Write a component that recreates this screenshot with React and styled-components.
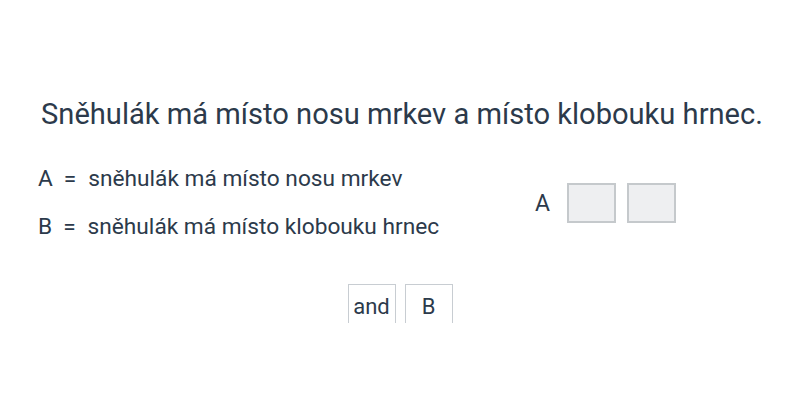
import React from 'react';
import styled, {createGlobalStyle} from "styled-components";

const GlobalStyle = createGlobalStyle`
  html, body {
    margin: 0;
    padding: 0;
    background: #ffffff;
  }
  body {
    font-family: Roboto, "Liberation Sans", sans-serif;
    color: #2c3a4b;
  }
`

const Page = styled.div`
  width: 800px;
  height: 400px;
  box-sizing: border-box;
  padding-top: 94px;
  display: flex;
  flex-direction: column;
  align-items: center;
`

const Title = styled.h1`
  margin: 0 0 0 4px;
  font-size: 29.1px;
  font-weight: 400;
  line-height: 40px;
  white-space: nowrap;
`

const Middle = styled.div`
  width: 100%;
  box-sizing: border-box;
  margin-top: 27px;
  padding: 0 124px 0 38px;
  display: flex;
  align-items: center;
  justify-content: space-between;
`

const Definitions = styled.div`
  display: flex;
  flex-direction: column;
  gap: 12px;
`

const Def = styled.div`
  font-size: 22.7px;
  line-height: 36px;
  white-space: nowrap;
`

const Eq = styled.span`
  display: inline-block;
  margin: 0 12px 0 11px;
`

const Slots = styled.div`
  display: flex;
  align-items: center;
  gap: 11px;
`

const SlotLabel = styled.span`
  font-size: 23px;
  margin-right: 6px;
`

const Slot = styled.div`
  width: 45px;
  height: 36px;
  border: 2px solid #c5c9cc;
  background: #eeeff1;
`

const Bottom = styled.div`
  margin-top: 39px;
  height: 39px;
  overflow: hidden;
  display: flex;
  gap: 9px;
`

const Chip = styled.div`
  width: 46px;
  height: 44px;
  border: 1px solid #c8cdd2;
  font-size: 22px;
  display: flex;
  justify-content: center;
  padding-top: 9px;
`

export default function App() {
  return (
    <>
      <GlobalStyle/>
      <Page>
        <Title>Sněhulák má místo nosu mrkev a místo klobouku hrnec.</Title>
        <Middle>
          <Definitions>
            <Def>A<Eq>=</Eq>sněhulák má místo nosu mrkev</Def>
            <Def>B<Eq>=</Eq>sněhulák má místo klobouku hrnec</Def>
          </Definitions>
          <Slots>
            <SlotLabel>A</SlotLabel>
            <Slot/>
            <Slot/>
          </Slots>
        </Middle>
        <Bottom>
          <Chip>and</Chip>
          <Chip>B</Chip>
        </Bottom>
      </Page>
    </>
  )
}
